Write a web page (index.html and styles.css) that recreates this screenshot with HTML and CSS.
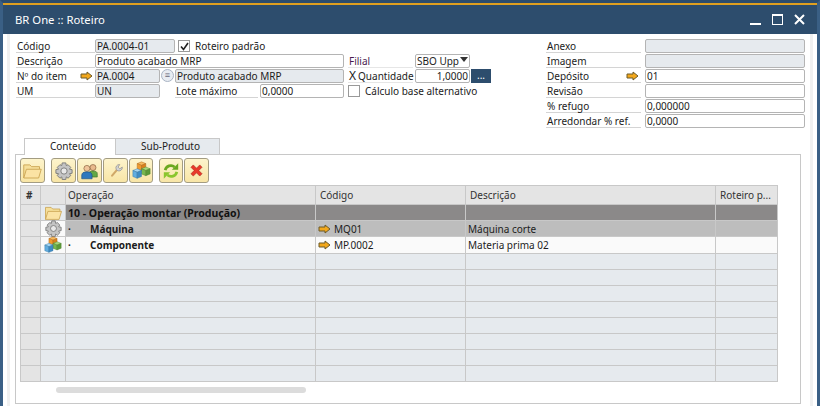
FILE: index.html
```html
<!DOCTYPE html>
<html lang="pt">
<head>
    <meta charset="UTF-8">
    <title>BR One :: Roteiro</title>
    <link rel="stylesheet" href="styles.css">
</head>
<body>
    <svg class="defs" width="0" height="0">
        <symbol id="arrow" viewBox="0 0 13 10">
            <path d="M1 3h6V1l5 4-5 4V7H1z" fill="#f2a71b" stroke="#6b5a2a" stroke-width="1"/>
        </symbol>
        <symbol id="folder" viewBox="0 0 24 20">
            <path d="M2 18V3h7l2 2h9v3" fill="#f6df9a" stroke="#c9a24f"/>
            <path d="M2 18l3-10h17l-3 10z" fill="#fbe3a4" stroke="#c9a24f"/>
        </symbol>
        <symbol id="gear" viewBox="0 0 20 20">
            <path d="M8 1h4l.5 3 2-1 3 3-1.500 2 3 .5v4l-3 .5 1.500 2-3 3-2-1.500-.5 3H8l-.5-3-2 1.500-3-3 1.500-2-3-.5V8.500l3-.5L2.500 6l3-3 2 1z" fill="#c4c4c4" stroke="#777"/>
            <circle cx="10" cy="10" r="3.500" fill="#e8e8e8" stroke="#777"/>
        </symbol>
        <symbol id="people" viewBox="0 0 22 20">
            <circle cx="15" cy="6" r="3.500" fill="#e8b98c" stroke="#7a5230" stroke-width=".7"/>
            <path d="M10 17v-4q0-3 5-3t5 3v4z" fill="#63a845" stroke="#386b25" stroke-width=".7"/>
            <circle cx="8" cy="7" r="3.500" fill="#efc49a" stroke="#7a5230" stroke-width=".7"/>
            <path d="M2 19v-4q0-4 6-4t6 4v4z" fill="#2f78bd" stroke="#1d4d7d" stroke-width=".7"/>
        </symbol>
        <symbol id="wrench" viewBox="0 0 20 20">
            <path d="M6 16l6-7" stroke="#d0a868" stroke-width="2.500" stroke-linecap="round"/>
            <path d="M11 9a4 4 0 0 1 4-6l-2 3 2 2 3-2a4 4 0 0 1-6 4z" fill="#d4d4d4" stroke="#8c8c8c" stroke-width=".8"/>
        </symbol>
        <symbol id="cubes" viewBox="0 0 22 22">
            <path d="M11 1l5 2-5 2-5-2z" fill="#f7bb5e" stroke="#a8651a" stroke-width=".5"/>
            <path d="M6 3l5 2v6L6 9z" fill="#ef9a2e" stroke="#a8651a" stroke-width=".5"/>
            <path d="M16 3l-5 2v6l5-2z" fill="#d9801c" stroke="#a8651a" stroke-width=".5"/>
            <path d="M16 7l5 2-5 2-5-2z" fill="#a5d77a" stroke="#4c7f2e" stroke-width=".5"/>
            <path d="M11 9l5 2v6l-5-2z" fill="#76b84e" stroke="#4c7f2e" stroke-width=".5"/>
            <path d="M21 9l-5 2v6l5-2z" fill="#5a9a38" stroke="#4c7f2e" stroke-width=".5"/>
            <path d="M6 9l5 2-5 2-5-2z" fill="#a6d6f2" stroke="#2d6f9f" stroke-width=".5"/>
            <path d="M1 11l5 2v7l-5-2z" fill="#62aee0" stroke="#2d6f9f" stroke-width=".5"/>
            <path d="M11 11l-5 2v7l5-2z" fill="#3f8cc4" stroke="#2d6f9f" stroke-width=".5"/>
        </symbol>
        <symbol id="refresh" viewBox="0 0 20 20">
            <path d="M3.500 9a6.500 6.500 0 0 1 10.500-3.500" fill="none" stroke="#6aa81f" stroke-width="3"/>
            <path d="M11 8.500h7v-7z" fill="#6aa81f"/>
            <path d="M16.500 11a6.500 6.500 0 0 1-10.500 3.500" fill="none" stroke="#8cc62e" stroke-width="3"/>
            <path d="M9 11.500H2v7z" fill="#8cc62e"/>
        </symbol>
        <symbol id="cross" viewBox="0 0 14 14">
            <path d="M1 3.500L3.500 1 7 4.500 10.500 1 13 3.500 9.500 7 13 10.500 10.500 13 7 9.500 3.500 13 1 10.500 4.500 7z" fill="#e8392b" stroke="#a8241a" stroke-width=".6"/>
        </symbol>
    </svg>

    <div class="window">
        <header class="titlebar">
            <h1>BR One :: Roteiro</h1>
            <div class="win-controls">
                <span class="win-min"></span>
                <span class="win-max"></span>
                <svg class="win-close" width="11" height="11" viewBox="0 0 11 11"><path d="M1 1l9 9M10 1l-9 9" stroke="#fff" stroke-width="2"/></svg>
            </div>
        </header>

        <div class="content">
            <div class="form-area">
                <div class="form-left">
                    <div class="row">
                        <span class="lbl lbl-main">Código</span>
                        <span class="field ro w80">PA.0004-01</span>
                        <span class="check checked"><svg width="9" height="9" viewBox="0 0 9 9"><path d="M1 4.500l2.500 3L8 1" fill="none" stroke="#222" stroke-width="1.600"/></svg></span>
                        <span class="check-text">Roteiro padrão</span>
                    </div>
                    <div class="row">
                        <span class="lbl lbl-main">Descrição</span>
                        <span class="field w249">Produto acabado MRP</span>
                        <span class="lbl lbl-mid filial">Filial</span>
                        <span class="field w55 select">SBO Upp<i class="caret"></i></span>
                    </div>
                    <div class="row">
                        <span class="lbl lbl-main">Nº do item<svg class="link-arrow" width="13" height="10"><use href="#arrow"/></svg></span>
                        <span class="field ro w65">PA.0004</span>
                        <span class="list-btn">≡</span>
                        <span class="field ro w169">Produto acabado MRP</span>
                        <span class="lbl lbl-mid"><b class="x-mark">X</b>Quantidade</span>
                        <span class="field w55 num">1,0000</span>
                        <span class="more-btn">...</span>
                    </div>
                    <div class="row">
                        <span class="lbl lbl-main">UM</span>
                        <span class="field ro w65">UN</span>
                        <span class="lbl lbl-lote">Lote máximo</span>
                        <span class="field w84">0,0000</span>
                        <span class="check alt"></span>
                        <span class="check-text">Cálculo base alternativo</span>
                    </div>
                </div>
                <div class="form-right">
                    <div class="row"><span class="lbl lbl-side">Anexo</span><span class="field ro w160"></span></div>
                    <div class="row"><span class="lbl lbl-side">Imagem</span><span class="field ro w160"></span></div>
                    <div class="row"><span class="lbl lbl-side">Depósito<svg class="link-arrow" width="13" height="10"><use href="#arrow"/></svg></span><span class="field w160">01</span></div>
                    <div class="row"><span class="lbl lbl-side">Revisão</span><span class="field w160"></span></div>
                    <div class="row"><span class="lbl lbl-side">% refugo</span><span class="field w160">0,000000</span></div>
                    <div class="row"><span class="lbl lbl-side">Arredondar % ref.</span><span class="field w160">0,0000</span></div>
                </div>
            </div>

            <div class="tabs">
                <span class="tab active">Conteúdo</span>
                <span class="tab second">Sub-Produto</span>
            </div>

            <div class="panel">
                <div class="toolbar">
                    <span class="tool"><svg width="21" height="18"><use href="#folder"/></svg></span>
                    <span class="tool push"><svg width="18" height="18"><use href="#gear"/></svg></span>
                    <span class="tool"><svg width="19" height="18"><use href="#people"/></svg></span>
                    <span class="tool"><svg width="17" height="17"><use href="#wrench"/></svg></span>
                    <span class="tool narrow"><svg width="19" height="19"><use href="#cubes"/></svg></span>
                    <span class="tool narrow push"><svg width="18" height="18"><use href="#refresh"/></svg></span>
                    <span class="tool"><svg width="13" height="13"><use href="#cross"/></svg></span>
                </div>

                <table class="grid">
                    <colgroup>
                        <col class="c-num"><col class="c-icon"><col class="c-op"><col class="c-code"><col class="c-desc"><col class="c-rot">
                    </colgroup>
                    <thead>
                        <tr><th class="hash">#</th><th></th><th class="op-head">Operação</th><th>Código</th><th>Descrição</th><th>Roteiro p...</th></tr>
                    </thead>
                    <tbody>
                        <tr class="group">
                            <td class="num-cell"></td>
                            <td class="icon-cell"><svg width="21" height="16"><use href="#folder"/></svg></td>
                            <td>10 - Operação montar (Produção)</td><td></td><td></td><td></td>
                        </tr>
                        <tr class="machine">
                            <td class="num-cell"></td>
                            <td class="icon-cell white"><svg width="17" height="17"><use href="#gear"/></svg></td>
                            <td class="name"><span class="dot">·</span>Máquina</td>
                            <td><svg class="link-arrow" width="13" height="10"><use href="#arrow"/></svg>MQ01</td>
                            <td>Máquina corte</td><td></td>
                        </tr>
                        <tr class="part">
                            <td class="num-cell"></td>
                            <td class="icon-cell white"><svg width="18" height="18"><use href="#cubes"/></svg></td>
                            <td class="name"><span class="dot">·</span>Componente</td>
                            <td><svg class="link-arrow" width="13" height="10"><use href="#arrow"/></svg>MP.0002</td>
                            <td>Materia prima 02</td><td></td>
                        </tr>
                        <tr><td class="num-cell"></td><td></td><td></td><td></td><td></td><td></td></tr>
                        <tr><td class="num-cell"></td><td></td><td></td><td></td><td></td><td></td></tr>
                        <tr><td class="num-cell"></td><td></td><td></td><td></td><td></td><td></td></tr>
                        <tr><td class="num-cell"></td><td></td><td></td><td></td><td></td><td></td></tr>
                        <tr><td class="num-cell"></td><td></td><td></td><td></td><td></td><td></td></tr>
                        <tr><td class="num-cell"></td><td></td><td></td><td></td><td></td><td></td></tr>
                        <tr><td class="num-cell"></td><td></td><td></td><td></td><td></td><td></td></tr>
                        <tr><td class="num-cell"></td><td></td><td></td><td></td><td></td><td></td></tr>
                    </tbody>
                </table>
                <div class="scrollbar"></div>
            </div>
        </div>
    </div>
</body>
</html>
```

FILE: styles.css
```css
html, body {
    margin: 0;
    padding: 0;
    height: 100%;
    overflow: hidden;
}
body {
    font-family: "Noto Sans", Arial, sans-serif;
    font-size: 10px;
    color: #1c1c1c;
    background: #fff;
}
.defs {
    display: block;
    height: 0;
}
.window {
    height: 403px;
    border: 3px solid #3a5f85;
    border-bottom: none;
    border-top-color: #2d4d6d;
    display: flex;
    flex-direction: column;
    background: #fff;
}
.titlebar {
    height: 29px;
    flex: none;
    background: #2d4d6d;
    border-top: 2px solid #e0a020;
    display: flex;
    align-items: center;
    justify-content: space-between;
    color: #fff;
}
.titlebar h1 {
    margin: 0 0 0 12px;
    font-size: 11.300px;
    font-weight: normal;
}
.win-controls {
    display: flex;
    align-items: center;
    gap: 11px;
    margin-right: 12px;
}
.win-min {
    width: 11px;
    height: 2px;
    background: #fff;
    margin-top: 9px;
}
.win-max {
    width: 9px;
    height: 8px;
    border: 1px solid #fff;
    border-top-width: 2px;
}
.content {
    flex: 1;
    margin: 0 4px;
    padding: 0 5px;
    border-left: 3px solid #f0f0f0;
    border-right: 3px solid #f0f0f0;
}
.form-area {
    display: flex;
    padding: 5px 0 0 1px;
    height: 99px;
}
.form-left {
    flex: none;
    width: 530px;
}
.form-right {
    flex: none;
}
.row {
    display: flex;
    height: 15px;
}
.lbl {
    box-sizing: border-box;
    height: 14px;
    line-height: 14px;
    border-bottom: 1px solid #d4d4d4;
    padding-left: 1px;
    position: relative;
    white-space: nowrap;
}
.lbl-main {
    width: 79px;
}
.lbl-mid {
    width: 65px;
    margin: 0 2px 0 4px;
    border-bottom-color: #e6e6e6;
}
.filial {
    color: #4a1a50;
}
.lbl-lote {
    width: 83px;
    margin: 0 2px 0 15px;
}
.lbl-side {
    width: 95px;
    margin-right: 4px;
}
.lbl .link-arrow {
    position: absolute;
    right: 2px;
    top: 2px;
}
.field {
    box-sizing: border-box;
    height: 14px;
    line-height: 12px;
    border: 1px solid #b4b4b4;
    border-radius: 2px;
    padding: 0 1px;
    background: #fff;
    white-space: nowrap;
    overflow: hidden;
    position: relative;
}
.field.ro {
    background: #e6eaee;
}
.num {
    text-align: right;
}
.w55 { width: 55px; }
.w65 { width: 65px; }
.w80 { width: 80px; }
.w84 { width: 84px; }
.w160 { width: 160px; }
.w169 { width: 169px; }
.w249 { width: 249px; }
.select .caret {
    position: absolute;
    right: 1px;
    top: 2px;
    border: 4px solid transparent;
    border-top: 5px solid #333;
    border-bottom: none;
}
.check {
    box-sizing: border-box;
    width: 12px;
    height: 12px;
    border: 1px solid #999;
    background: #fff;
    margin: 1px 5px 0 3px;
    display: flex;
    align-items: center;
    justify-content: center;
}
.check.alt {
    margin-left: 4px;
}
.check-text {
    line-height: 14px;
}
.list-btn {
    box-sizing: border-box;
    width: 13px;
    height: 13px;
    margin: 0 1px;
    border: 1px solid #a9b4c4;
    border-radius: 50%;
    background: #e8ecf2;
    color: #667;
    font-size: 9px;
    line-height: 10px;
    text-align: center;
}
.x-mark {
    font-weight: normal;
    font-size: 12px;
    margin-right: 2px;
}
.more-btn {
    width: 20px;
    height: 14px;
    margin-left: 1px;
    background: #2d4d6d;
    color: #fff;
    text-align: center;
    line-height: 12px;
}
.tabs {
    display: flex;
    height: 16px;
    padding-left: 9px;
}
.tab {
    box-sizing: border-box;
    height: 16px;
    line-height: 15px;
    text-align: center;
    padding-left: 6px;
    border: 1px solid #c8c8c8;
    border-bottom: none;
}
.tab.active {
    width: 92px;
    background: #fff;
    height: 17px;
    position: relative;
    z-index: 1;
}
.tab.second {
    width: 104px;
    background: #e6eaee;
    border-left: none;
}
.panel {
    box-sizing: border-box;
    width: 786px;
    height: 250px;
    border: 1px solid #c8c8c8;
    padding: 3px 4px;
}
.toolbar {
    display: flex;
    gap: 1px;
    height: 25px;
    margin-bottom: 2px;
}
.tool {
    box-sizing: border-box;
    width: 25px;
    height: 25px;
    border: 1px solid #a39c82;
    border-radius: 3px;
    background: linear-gradient(#fdf4cc, #f8e5a6);
    display: flex;
    align-items: center;
    justify-content: center;
}
.tool.narrow {
    width: 24px;
}
.tool.push {
    margin-left: 5px;
}
.grid {
    table-layout: fixed;
    border-collapse: separate;
    border-spacing: 0;
    width: 758px;
    border-top: 1px solid #c8c8c8;
    border-left: 1px solid #c8c8c8;
}
.c-num { width: 20px; }
.c-icon { width: 25px; }
.c-op { width: 250px; }
.c-code { width: 150px; }
.c-desc { width: 250px; }
.c-rot { width: 62px; }
.grid th, .grid td {
    box-sizing: border-box;
    height: 16px;
    padding: 0 2px;
    border-right: 1px solid #c8c8c8;
    border-bottom: 1px solid #c8c8c8;
    background: #e6eaee;
    white-space: nowrap;
    overflow: hidden;
    line-height: 14px;
}
.grid th {
    height: 19px;
    background: #e4e4e4;
    font-weight: normal;
    text-align: left;
    padding-left: 4px;
    color: #333;
}
.grid .op-head {
    padding-left: 2px;
}
.grid .hash {
    font-weight: bold;
    padding-left: 5px;
}
.grid .num-cell {
    background: #e4e4e4;
}
.grid .icon-cell {
    padding: 0;
    text-align: center;
    overflow: visible;
}
.icon-cell svg {
    display: block;
    margin: -1px auto;
}
.group td {
    background: #8b8989;
    font-size: 10.500px;
    font-weight: bold;
    color: #111;
}
.group td.icon-cell {
    background: #e6eaee;
}
.machine td {
    background: #bdbdbd;
}
.part td {
    background: #fafafa;
}
.grid .white {
    background: #fafafa;
}
.name {
    font-weight: bold;
}
.dot {
    display: inline-block;
    width: 22px;
}
.grid td .link-arrow {
    vertical-align: -1px;
    margin-right: 3px;
}
.scrollbar {
    width: 250px;
    height: 6px;
    margin: 5px 0 0 36px;
    background: #dcdcdc;
    border-radius: 3px;
}
```
